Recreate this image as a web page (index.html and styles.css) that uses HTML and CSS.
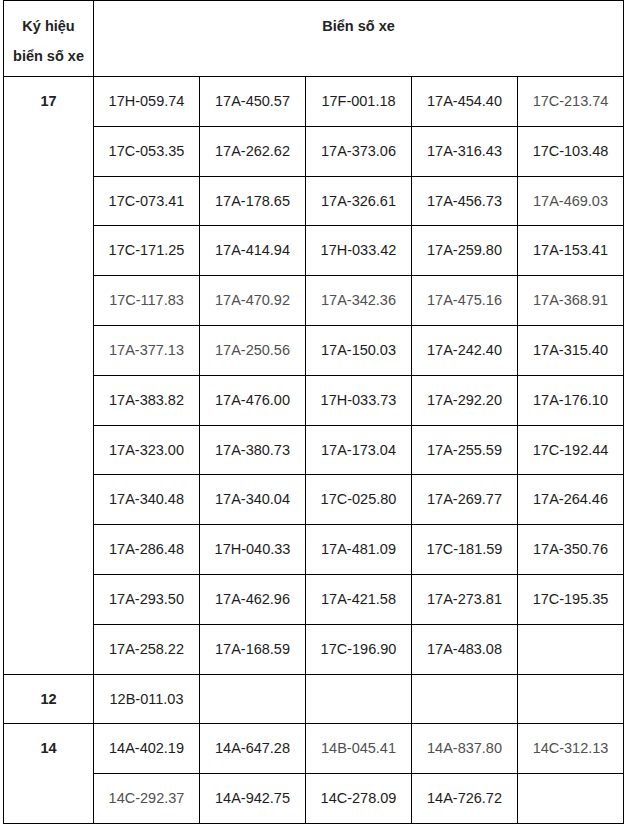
FILE: index.html
```html
<!DOCTYPE html>
<html lang="vi">
<head>
<meta charset="utf-8">
<title>Biển số xe</title>
<link rel="stylesheet" href="styles.css">
</head>
<body>
<table class="plates">
  <colgroup>
    <col class="c-key">
    <col class="c-val"><col class="c-val"><col class="c-val"><col class="c-val"><col class="c-val">
  </colgroup>
  <thead>
    <tr>
      <th class="head">Ký hiệu<br>biển số xe</th>
      <th class="head" colspan="5">Biển số xe</th>
    </tr>
  </thead>
  <tbody>
    <tr><td class="key" rowspan="12">17</td><td>17H-059.74</td><td>17A-450.57</td><td>17F-001.18</td><td>17A-454.40</td><td class="grey">17C-213.74</td></tr>
    <tr><td>17C-053.35</td><td>17A-262.62</td><td>17A-373.06</td><td>17A-316.43</td><td>17C-103.48</td></tr>
    <tr><td>17C-073.41</td><td>17A-178.65</td><td>17A-326.61</td><td>17A-456.73</td><td class="grey">17A-469.03</td></tr>
    <tr><td>17C-171.25</td><td>17A-414.94</td><td>17H-033.42</td><td>17A-259.80</td><td>17A-153.41</td></tr>
    <tr><td class="grey">17C-117.83</td><td class="grey">17A-470.92</td><td class="grey">17A-342.36</td><td class="grey">17A-475.16</td><td class="grey">17A-368.91</td></tr>
    <tr><td class="grey">17A-377.13</td><td class="grey">17A-250.56</td><td>17A-150.03</td><td>17A-242.40</td><td>17A-315.40</td></tr>
    <tr><td>17A-383.82</td><td>17A-476.00</td><td>17H-033.73</td><td>17A-292.20</td><td>17A-176.10</td></tr>
    <tr><td>17A-323.00</td><td>17A-380.73</td><td>17A-173.04</td><td>17A-255.59</td><td>17C-192.44</td></tr>
    <tr><td>17A-340.48</td><td>17A-340.04</td><td>17C-025.80</td><td>17A-269.77</td><td>17A-264.46</td></tr>
    <tr><td>17A-286.48</td><td>17H-040.33</td><td>17A-481.09</td><td>17C-181.59</td><td>17A-350.76</td></tr>
    <tr><td>17A-293.50</td><td>17A-462.96</td><td>17A-421.58</td><td>17A-273.81</td><td>17C-195.35</td></tr>
    <tr><td>17A-258.22</td><td>17A-168.59</td><td>17C-196.90</td><td>17A-483.08</td><td></td></tr>
    <tr><td class="key">12</td><td>12B-011.03</td><td></td><td></td><td></td><td></td></tr>
    <tr><td class="key" rowspan="2">14</td><td>14A-402.19</td><td>14A-647.28</td><td class="grey">14B-045.41</td><td class="grey">14A-837.80</td><td class="grey">14C-312.13</td></tr>
    <tr><td class="grey">14C-292.37</td><td>14A-942.75</td><td>14C-278.09</td><td>14A-726.72</td><td></td></tr>
    <tr><td class="key">&nbsp;</td><td></td><td></td><td></td><td></td><td></td></tr>
  </tbody>
</table>
</body>
</html>
```

FILE: styles.css
```css
html, body {
  margin: 0;
  padding: 0;
  background: #fff;
}

.plates {
  margin-left: 3px;
  width: 620px;
  border-collapse: collapse;
  table-layout: fixed;
  font-family: "Liberation Sans", Arial, sans-serif;
  font-size: 14.5px;
  color: #1c1c1c;
}

.c-key { width: 90px; }
.c-val { width: 106px; }

.plates th,
.plates td {
  border: 1px solid #000;
  text-align: center;
  vertical-align: top;
  padding: 14px 2px 13px;
  line-height: 21.8px;
  font-weight: normal;
}

.plates th.head {
  font-weight: bold;
  color: #222;
  line-height: 30px;
  padding: 10px 2px 5px;
}

.plates td.key {
  font-weight: bold;
  color: #222;
}

.plates td.grey {
  color: #505050;
}
```
